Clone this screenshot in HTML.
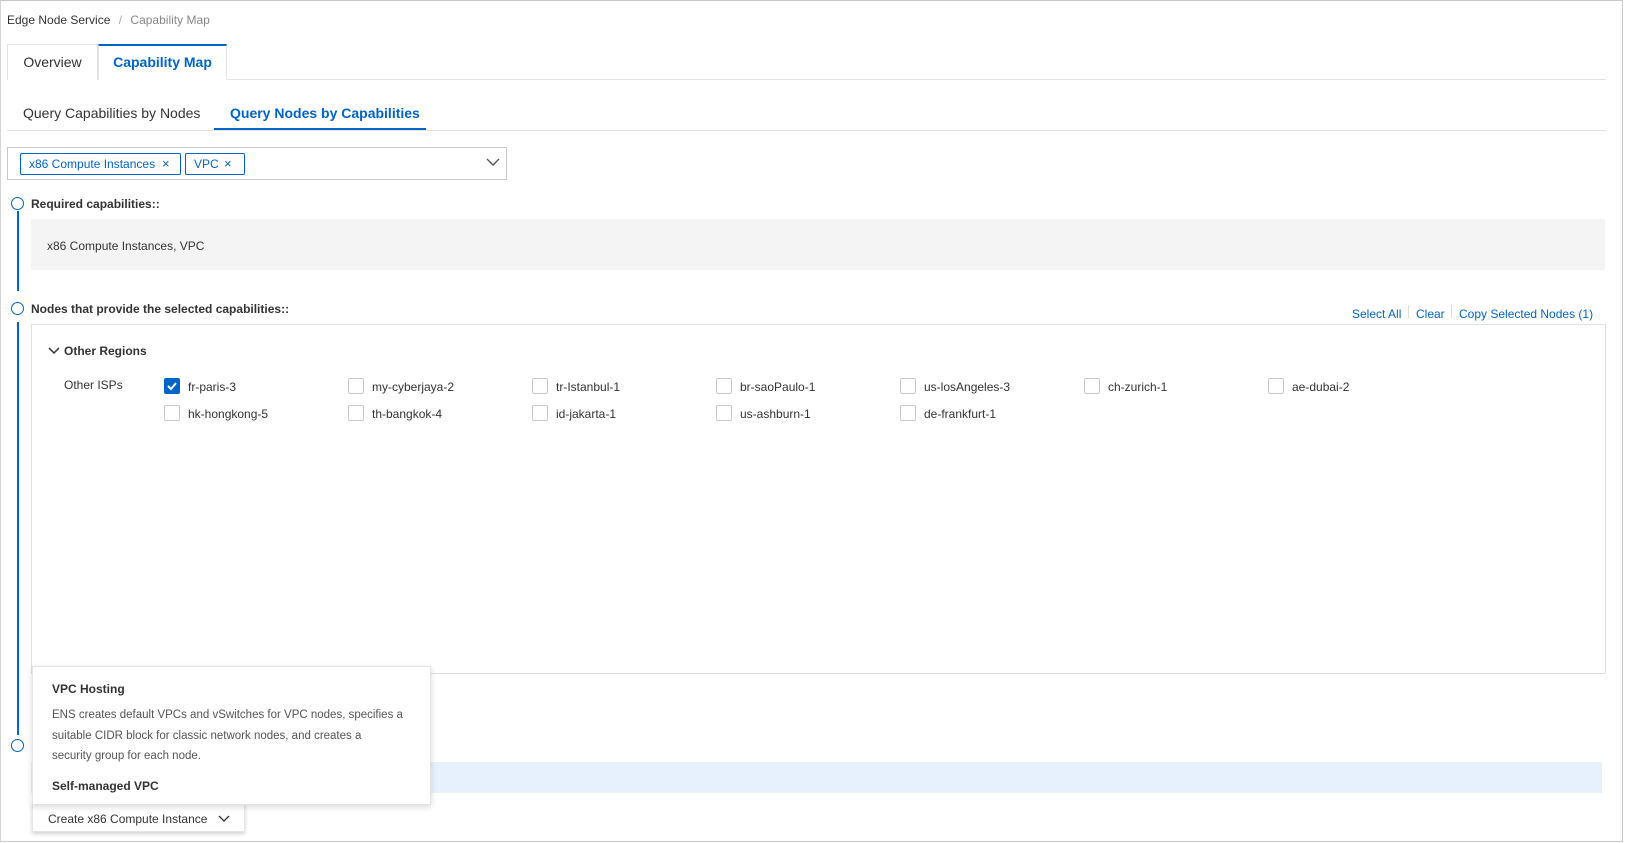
<!DOCTYPE html>
<html><head><meta charset="utf-8"><style>
*{box-sizing:border-box;margin:0;padding:0}
body{width:1627px;height:843px;background:#fff;font-family:"Liberation Sans",sans-serif;font-size:12px;color:#333;position:relative;overflow:hidden}
.a{position:absolute;white-space:nowrap}
.frame{position:absolute;left:0;top:0;width:1623px;height:842px;border:1px solid #c8c8c8;border-left:1px solid #d5d5d5}
.blue{color:#0064c8}
.cb{position:absolute;width:16px;height:16px;border:1px solid #c9c9c9;border-radius:2px;background:#fff}
.cbl{position:absolute;font-size:12px;color:#333}
.circ{position:absolute;left:11px;width:13px;height:13px;border:1.5px solid #0064c8;border-radius:50%;background:#fff}
</style></head><body>
<div class="frame"></div>
<div class="a" style="left:7px;top:13px;color:#333">Edge Node Service <span style="color:#aaa;margin:0 5px">/</span> <span style="color:#888">Capability Map</span></div>

<div class="a" style="left:7px;top:79px;width:1599px;height:1px;background:#e3e3e3"></div>
<div class="a" style="left:7px;top:44px;width:91px;height:36px;border:1px solid #e3e3e3;border-bottom:none;background:#fff;font-size:14px;line-height:34px;text-align:center">Overview</div>
<div class="a" style="left:98px;top:44px;width:129px;height:36px;border:1px solid #e3e3e3;border-top:2px solid #0064c8;border-bottom:1px solid #fff;background:#fff;font-size:14px;line-height:32px;text-align:center;color:#0064c8;font-weight:bold">Capability Map</div>

<div class="a" style="left:7px;top:130px;width:1599px;height:1px;background:#e3e3e3"></div>
<div class="a" style="left:23px;top:105px;font-size:14px">Query Capabilities by Nodes</div>
<div class="a" style="left:230px;top:105px;font-size:14px;color:#0064c8;font-weight:bold">Query Nodes by Capabilities</div>
<div class="a" style="left:214px;top:128px;width:212px;height:2px;background:#0064c8"></div>

<div class="a" style="left:7px;top:147px;width:500px;height:33px;border:1px solid #c9c9c9;background:#fff"></div>
<div class="a" style="left:20px;top:153px;width:161px;height:22px;border:1px solid #0064c8;border-radius:2px;color:#0064c8;line-height:20px;padding-left:8px;font-size:12px">x86 Compute Instances<span style="position:absolute;left:141px;font-size:13px">×</span></div>
<div class="a" style="left:185px;top:153px;width:60px;height:22px;border:1px solid #0064c8;border-radius:2px;color:#0064c8;line-height:20px;padding-left:8px;font-size:12px">VPC<span style="position:absolute;left:38px;font-size:13px">×</span></div>
<svg class="a" style="left:486px;top:157px" width="14" height="10"><path d="M1 2 L7 8 L13 2" stroke="#555" stroke-width="1.4" fill="none"/></svg>

<div class="a" style="left:17px;top:211px;width:2px;height:80px;background:#0064c8"></div>
<div class="a" style="left:17px;top:322px;width:2px;height:413px;background:#0064c8"></div>
<div class="circ" style="top:197px"></div>
<div class="circ" style="top:302px"></div>
<div class="circ" style="top:739px"></div>

<div class="a" style="left:31px;top:197px;font-weight:bold">Required capabilities::</div>
<div class="a" style="left:31px;top:219px;width:1574px;height:51px;background:#f4f4f4"></div>
<div class="a" style="left:47px;top:239px;font-size:12px">x86 Compute Instances, VPC</div>

<div class="a" style="left:31px;top:302px;font-weight:bold">Nodes that provide the selected capabilities::</div>
<div class="a blue" style="left:1352px;top:307px">Select All</div>
<div class="a" style="left:1408px;top:305px;width:1px;height:13px;background:#ddd"></div>
<div class="a blue" style="left:1416px;top:307px">Clear</div>
<div class="a" style="left:1451px;top:305px;width:1px;height:13px;background:#ddd"></div>
<div class="a blue" style="left:1459px;top:307px">Copy Selected Nodes (1)</div>

<div class="a" style="left:31px;top:324px;width:1575px;height:350px;border:1px solid #e0e0e0;background:#fff"></div>
<svg class="a" style="left:48px;top:346px" width="12" height="10"><path d="M1 2 L6 7 L11 2" stroke="#333" stroke-width="1.5" fill="none"/></svg>
<div class="a" style="left:64px;top:344px;font-weight:bold;color:#333">Other Regions</div>
<div class="a" style="left:64px;top:378px">Other ISPs</div>

<div class="cb" style="left:164px;top:378px;background:#0064c8;border-color:#0064c8"><svg width="14" height="14" style="position:absolute;left:0;top:0"><path d="M3 7 L6 10 L11 4" stroke="#fff" stroke-width="2" fill="none"/></svg></div>
<div class="cbl" style="left:188px;top:380px">fr-paris-3</div>
<div class="cb" style="left:348px;top:378px"></div><div class="cbl" style="left:372px;top:380px">my-cyberjaya-2</div>
<div class="cb" style="left:532px;top:378px"></div><div class="cbl" style="left:556px;top:380px">tr-Istanbul-1</div>
<div class="cb" style="left:716px;top:378px"></div><div class="cbl" style="left:740px;top:380px">br-saoPaulo-1</div>
<div class="cb" style="left:900px;top:378px"></div><div class="cbl" style="left:924px;top:380px">us-losAngeles-3</div>
<div class="cb" style="left:1084px;top:378px"></div><div class="cbl" style="left:1108px;top:380px">ch-zurich-1</div>
<div class="cb" style="left:1268px;top:378px"></div><div class="cbl" style="left:1292px;top:380px">ae-dubai-2</div>
<div class="cb" style="left:164px;top:405px"></div><div class="cbl" style="left:188px;top:407px">hk-hongkong-5</div>
<div class="cb" style="left:348px;top:405px"></div><div class="cbl" style="left:372px;top:407px">th-bangkok-4</div>
<div class="cb" style="left:532px;top:405px"></div><div class="cbl" style="left:556px;top:407px">id-jakarta-1</div>
<div class="cb" style="left:716px;top:405px"></div><div class="cbl" style="left:740px;top:407px">us-ashburn-1</div>
<div class="cb" style="left:900px;top:405px"></div><div class="cbl" style="left:924px;top:407px">de-frankfurt-1</div>

<div class="a" style="left:31px;top:762px;width:1571px;height:31px;background:#e6f1fd"></div>

<div class="a" style="left:32px;top:803px;width:213px;height:29px;background:#fff;box-shadow:0 2px 4px rgba(0,0,0,.18);border:1px solid #e5e5e5"></div>
<div class="a" style="left:48px;top:812px;color:#333">Create x86 Compute Instance</div>
<svg class="a" style="left:218px;top:815px" width="12" height="9"><path d="M1 1 L6 6 L11 1" stroke="#333" stroke-width="1.3" fill="none"/></svg>

<div class="a" style="left:32px;top:666px;width:399px;height:139px;background:#fff;border:1px solid #e3e3e3;box-shadow:0 2px 6px rgba(0,0,0,.15)"></div>
<div class="a" style="left:52px;top:682px;font-weight:bold;color:#333">VPC Hosting</div>
<div class="a" style="left:52px;top:705px;font-size:11.5px;color:#555;line-height:20.5px">ENS creates default VPCs and vSwitches for VPC nodes, specifies a<br>suitable CIDR block for classic network nodes, and creates a<br>security group for each node.</div>
<div class="a" style="left:52px;top:779px;font-weight:bold;color:#333">Self-managed VPC</div>
</body></html>
